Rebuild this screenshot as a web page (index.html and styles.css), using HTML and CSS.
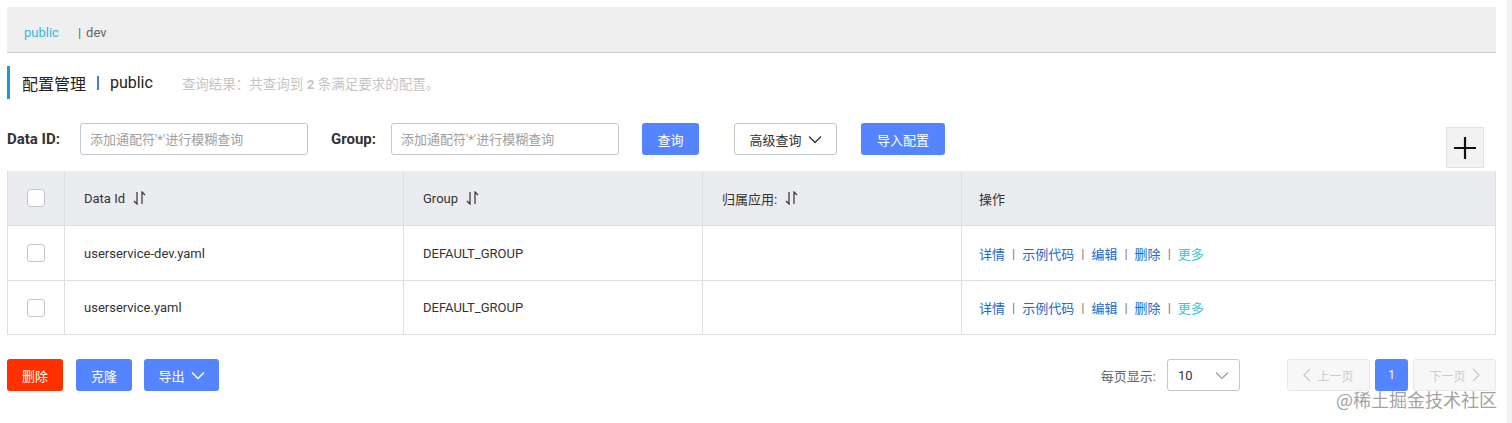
FILE: index.html
```html
<!DOCTYPE html>
<html lang="zh-CN">
<head>
    <meta charset="UTF-8">
    <title>配置管理</title>
    <link rel="stylesheet" href="styles.css">
</head>
<body>
    <div class="page">
        <div class="main">
            <div class="ns-bar">
                <span class="ns-item active">public</span>
                <span class="ns-sep">|</span>
                <span class="ns-item">dev</span>
            </div>
            <div class="page-title">
                <span class="title-text">配置管理</span>
                <span class="title-sep">|</span>
                <span class="title-text">public</span>
                <span class="title-desc">查询结果：共查询到 <b>2</b> 条满足要求的配置。</span>
            </div>
            <div class="filter-row">
                <label class="filter-label">Data ID:</label>
                <input class="filter-input" type="text" placeholder="添加通配符'*'进行模糊查询">
                <label class="filter-label group-label">Group:</label>
                <input class="filter-input" type="text" placeholder="添加通配符'*'进行模糊查询">
                <div class="btn btn-primary btn-search">查询</div>
                <div class="btn btn-normal btn-advanced">高级查询
                    <svg class="chev" width="14" height="9" viewBox="0 0 14 9"><path d="M1 1.5 L7 7.5 L13 1.5" fill="none" stroke="#333" stroke-width="1.3"/></svg>
                </div>
                <div class="btn btn-primary btn-import">导入配置</div>
                <div class="add-btn">
                    <svg width="24" height="24" viewBox="0 0 24 24"><path d="M12 1 V23 M1 12 H23" stroke="#111" stroke-width="2.2"/></svg>
                </div>
            </div>
            <div class="table">
                <div class="tr th">
                    <div class="td col-check"><span class="checkbox"></span></div>
                    <div class="td col-id">Data Id <svg class="sort" width="13" height="14" viewBox="0 0 13 14"><path d="M4 1 V13 L1 10 M9 13 V1 L12 4" fill="none" stroke="#333" stroke-width="1.2"/></svg></div>
                    <div class="td col-group">Group <svg class="sort" width="13" height="14" viewBox="0 0 13 14"><path d="M4 1 V13 L1 10 M9 13 V1 L12 4" fill="none" stroke="#333" stroke-width="1.2"/></svg></div>
                    <div class="td col-app">归属应用: <svg class="sort" width="13" height="14" viewBox="0 0 13 14"><path d="M4 1 V13 L1 10 M9 13 V1 L12 4" fill="none" stroke="#333" stroke-width="1.2"/></svg></div>
                    <div class="td col-op">操作</div>
                </div>
                <div class="tr">
                    <div class="td col-check"><span class="checkbox"></span></div>
                    <div class="td col-id">userservice-dev.yaml</div>
                    <div class="td col-group">DEFAULT_GROUP</div>
                    <div class="td col-app"></div>
                    <div class="td col-op">
                        <a class="op-link">详情</a><span class="op-sep">|</span><a class="op-link">示例代码</a><span class="op-sep">|</span><a class="op-link">编辑</a><span class="op-sep">|</span><a class="op-link">删除</a><span class="op-sep">|</span><a class="op-link more">更多</a>
                    </div>
                </div>
                <div class="tr last">
                    <div class="td col-check"><span class="checkbox"></span></div>
                    <div class="td col-id">userservice.yaml</div>
                    <div class="td col-group">DEFAULT_GROUP</div>
                    <div class="td col-app"></div>
                    <div class="td col-op">
                        <a class="op-link">详情</a><span class="op-sep">|</span><a class="op-link">示例代码</a><span class="op-sep">|</span><a class="op-link">编辑</a><span class="op-sep">|</span><a class="op-link">删除</a><span class="op-sep">|</span><a class="op-link more">更多</a>
                    </div>
                </div>
            </div>
            <div class="footer">
                <div class="btn btn-danger">删除</div>
                <div class="btn btn-primary btn-clone">克隆</div>
                <div class="btn btn-primary btn-export">导出
                    <svg class="chev" width="14" height="9" viewBox="0 0 14 9"><path d="M1 1.5 L7 7.5 L13 1.5" fill="none" stroke="#fff" stroke-width="1.5"/></svg>
                </div>
                <div class="pager">
                    <span class="page-size-label">每页显示:</span>
                    <div class="page-size">
                        <span>10</span>
                        <svg width="14" height="9" viewBox="0 0 14 9"><path d="M1 1.5 L7 7.5 L13 1.5" fill="none" stroke="#999" stroke-width="1.2"/></svg>
                    </div>
                    <div class="page-btn disabled prev">
                        <svg width="8" height="14" viewBox="0 0 8 14"><path d="M7 1 L1 7 L7 13" fill="none" stroke="#c8c8c8" stroke-width="1.2"/></svg>
                        上一页
                    </div>
                    <div class="page-btn current">1</div>
                    <div class="page-btn disabled next">下一页
                        <svg width="8" height="14" viewBox="0 0 8 14"><path d="M1 1 L7 7 L1 13" fill="none" stroke="#c8c8c8" stroke-width="1.2"/></svg>
                    </div>
                </div>
            </div>
        </div>
        <div class="scroll-track"></div>
    </div>
    <div class="watermark">@稀土掘金技术社区</div>
</body>
</html>
```

FILE: styles.css
```css
body {
    margin: 0;
    padding: 0;
    font-family: 'Roboto', 'Noto Sans CJK SC', sans-serif;
    font-size: 13px;
    color: #333333;
    background-color: #FFFFFF;
    height: 423px;
    overflow: hidden;
}
.page {
    display: flex;
    height: 423px;
}
.main {
    flex: 1;
    padding: 7px 11px 0 7px;
    display: flex;
    flex-direction: column;
}
.scroll-track {
    width: 5px;
    background-color: #F2F2F2;
}
.ns-bar {
    height: 46px;
    box-sizing: border-box;
    background-color: #EFEFEF;
    border-bottom: 1px solid #CCCCCC;
    display: flex;
    align-items: center;
    padding: 5px 0 0 17px;
    font-size: 13px;
    color: #666666;
}
.ns-item.active {
    color: #33B9DB;
}
.ns-sep {
    margin: 0 5px 0 19px;
    color: #666666;
}
.page-title {
    margin-top: 13px;
    height: 33px;
    border-left: 3px solid #1C9AD0;
    padding-left: 12px;
    display: flex;
    align-items: center;
    font-size: 16px;
    color: #222222;
}
.title-sep {
    margin: 0 10px;
}
.title-desc {
    margin-left: 29px;
    font-size: 13.5px;
    color: #C5C5C5;
}
.title-desc b {
    font-weight: bold;
}
.filter-row {
    margin-top: 24px;
    display: flex;
    align-items: flex-start;
}
.filter-label {
    height: 32px;
    line-height: 32px;
    font-size: 15px;
    font-weight: bold;
    color: #333333;
}
.filter-label:first-child {
    width: 73px;
}
.group-label {
    width: 60px;
    margin-left: 23px;
}
.filter-input {
    width: 228px;
    height: 32px;
    box-sizing: border-box;
    border: 1px solid #C4C6CF;
    border-radius: 3px;
    padding: 0 9px;
    font-family: 'Roboto', 'Noto Sans CJK SC', sans-serif;
    font-size: 13px;
    outline: none;
}
.filter-input::placeholder {
    color: #A0A0A0;
}
.btn {
    height: 32px;
    box-sizing: border-box;
    border-radius: 3px;
    display: flex;
    align-items: center;
    justify-content: center;
    font-size: 13px;
    white-space: nowrap;
}
.btn-primary {
    background-color: #5584FF;
    color: #FFFFFF;
}
.btn-normal {
    background-color: #FFFFFF;
    border: 1px solid #C4C6CF;
    color: #333333;
}
.btn-danger {
    background-color: #FF3000;
    color: #FFFFFF;
    width: 56px;
}
.chev {
    margin-left: 6px;
}
.btn-search {
    width: 57px;
    margin-left: 23px;
}
.btn-advanced {
    width: 103px;
    margin-left: 35px;
}
.btn-import {
    width: 84px;
    margin-left: 24px;
}
.add-btn {
    margin-left: auto;
    margin-right: 12px;
    margin-top: 4px;
    width: 38px;
    height: 41px;
    box-sizing: border-box;
    background-color: #F2F2F2;
    border: 1px solid #E2E2E2;
    display: flex;
    align-items: center;
    justify-content: center;
}
.table {
    margin-top: 3px;
    border: 1px solid #DCDEE3;
    border-top: none;
    border-bottom: none;
}
.tr {
    display: flex;
    height: 55px;
    border-bottom: 1px solid #DCDEE3;
    box-sizing: border-box;
}
.th {
    height: 55px;
    background-color: #EBECF0;
}
.tr.last {
    height: 54px;
}
.td {
    display: flex;
    align-items: center;
    padding-left: 19px;
    border-left: 1px solid #DCDEE3;
    box-sizing: border-box;
    font-size: 13px;
    color: #333333;
}
.td:first-child {
    border-left: none;
}
.col-check {
    width: 56px;
    padding-left: 19px;
}
.col-id {
    width: 339px;
}
.col-group {
    width: 299px;
}
.col-app {
    width: 259px;
}
.col-op {
    flex: 1;
    padding-left: 17px;
}
.sort {
    margin-left: 8px;
}
.checkbox {
    width: 16px;
    height: 16px;
    border: 1px solid #C4C6CF;
    border-radius: 3px;
    background-color: #FFFFFF;
}
.op-link {
    color: #2468C4;
}
.op-link.more {
    color: #3CC5DC;
}
.op-sep {
    color: #777777;
    margin: 0 7px;
}
.footer {
    margin-top: 24px;
    display: flex;
    align-items: center;
}
.btn-clone {
    width: 56px;
    margin-left: 13px;
}
.btn-export {
    width: 75px;
    margin-left: 12px;
}
.pager {
    margin-left: auto;
    display: flex;
    align-items: center;
}
.page-size-label {
    font-size: 13px;
    color: #666666;
    margin-right: 11px;
}
.page-size {
    width: 73px;
    height: 32px;
    box-sizing: border-box;
    border: 1px solid #C4C6CF;
    border-radius: 3px;
    display: flex;
    align-items: center;
    justify-content: space-between;
    padding: 0 10px 0 10px;
    font-size: 13px;
    color: #333333;
    margin-right: 47px;
}
.page-btn {
    height: 32px;
    box-sizing: border-box;
    border-radius: 3px;
    display: flex;
    align-items: center;
    justify-content: center;
    font-size: 12px;
}
.page-btn.disabled {
    width: 83px;
    background-color: #F7F7F7;
    border: 1px solid #E6E7EB;
    color: #CCCCCC;
}
.page-btn.prev svg {
    margin-right: 6px;
}
.page-btn.next svg {
    margin-left: 6px;
}
.page-btn.current {
    width: 33px;
    margin: 0 5px 0 5px;
    background-color: #5584FF;
    color: #FFFFFF;
}
.watermark {
    position: absolute;
    right: 15px;
    top: 390px;
    font-family: 'Noto Sans CJK SC', sans-serif;
    font-size: 18px;
    line-height: 18px;
    color: #A3A3A3;
}
```
